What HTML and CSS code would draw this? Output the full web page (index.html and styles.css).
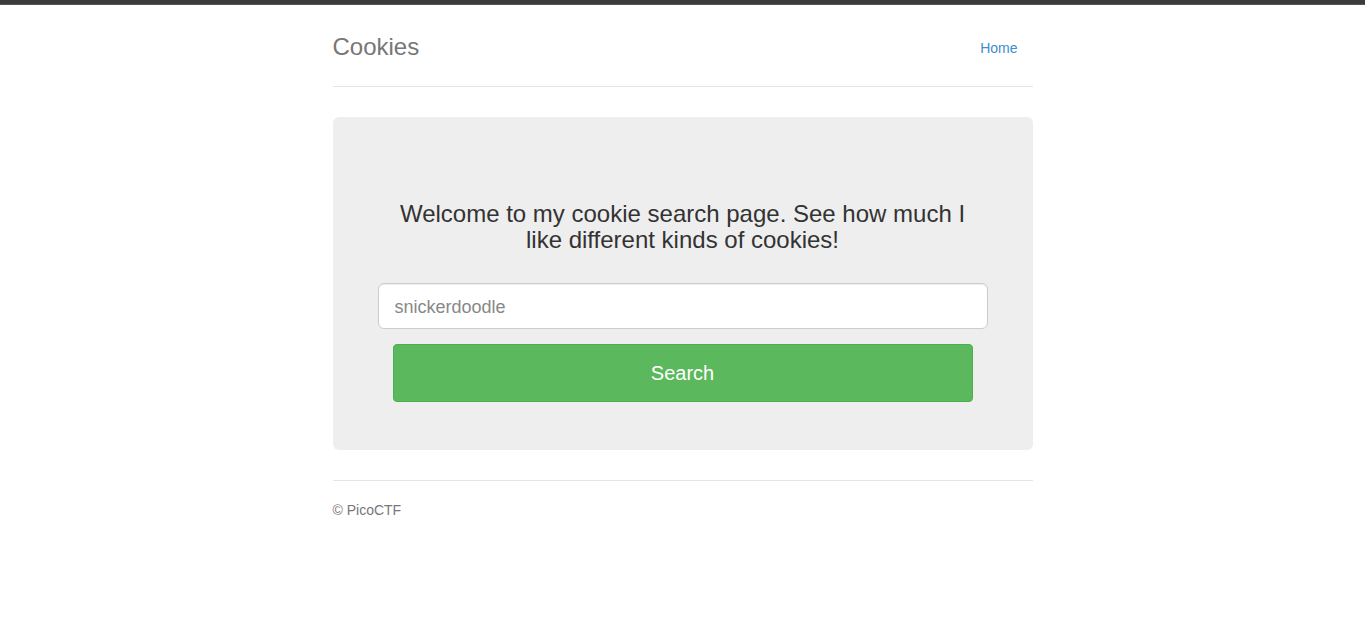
FILE: index.html
```
<!DOCTYPE html>
<html>
<head>
<meta charset="utf-8">
<title>Cookies</title>
<link rel="stylesheet" href="styles.css">
</head>
<body>
<div class="topbar"></div>
<div class="container">
  <div class="header">
    <h3 class="brand">Cookies</h3>
    <nav class="nav"><a href="#" class="nav-link">Home</a></nav>
  </div>
  <div class="jumbotron">
    <h3 class="welcome">Welcome to my cookie search page. See how much I like different kinds of cookies!</h3>
    <form class="search-form">
      <input class="search-input" type="text" placeholder="snickerdoodle">
      <button class="btn-search" type="button">Search</button>
    </form>
  </div>
  <footer class="footer">
    <p>© PicoCTF</p>
  </footer>
</div>
</body>
</html>
```
FILE: styles.css
```
* { box-sizing: border-box; }
html, body { margin: 0; padding: 0; }
body {
  font-family: "Liberation Sans", Arial, Helvetica, sans-serif;
  font-size: 14px;
  line-height: 1.42857;
  color: #333;
  background: #fff;
}
.topbar {
  height: 5px;
  background: #3c3c3c;
  border-bottom: 1px solid #555;
}
.container {
  max-width: 730px;
  margin: 0 auto;
  padding: 21px 15px 0;
}
.header {
  display: flex;
  justify-content: space-between;
  align-items: flex-start;
  padding-bottom: 18px;
  border-bottom: 1px solid #e5e5e5;
  margin-bottom: 30px;
}
.brand {
  margin: 0;
  padding-top: 1px;
  font-size: 24px;
  font-weight: 400;
  line-height: 40px;
  color: #777;
}
.nav { display: flex; margin-top: 2px; }
.nav-link {
  display: block;
  padding: 10px 15px;
  color: #428bca;
  text-decoration: none;
  line-height: 20px;
}
.jumbotron {
  background: #eee;
  border-radius: 6px;
  padding: 84px 60px 48px;
  text-align: center;
  margin-bottom: 30px;
}
.welcome {
  margin: 0 0 29px;
  font-size: 24px;
  font-weight: 400;
  line-height: 1.1;
  color: #333;
}
.search-form {
  display: flex;
  flex-direction: column;
  align-items: stretch;
  gap: 15px;
}
.search-input {
  margin: 0 -15px;
  height: 46px;
  padding: 12px 16px 8px;
  font-family: inherit;
  font-size: 18px;
  line-height: 1.3333;
  color: #555;
  background: #fff;
  border: 1px solid #ccc;
  border-radius: 6px;
  box-shadow: inset 0 1px 1px rgba(0,0,0,.075);
  outline: none;
}
.search-input::placeholder { color: #888; }
.btn-search {
  height: 58px;
  padding-top: 3px;
  font-family: inherit;
  font-size: 20px;
  color: #fff;
  background: #5cb85c;
  border: 1px solid #4cae4c;
  border-radius: 4px;
  cursor: pointer;
}
.footer {
  padding-top: 20px;
  border-top: 1px solid #e5e5e5;
  color: #777;
}
.footer p { margin: 0 0 10px; }
```
